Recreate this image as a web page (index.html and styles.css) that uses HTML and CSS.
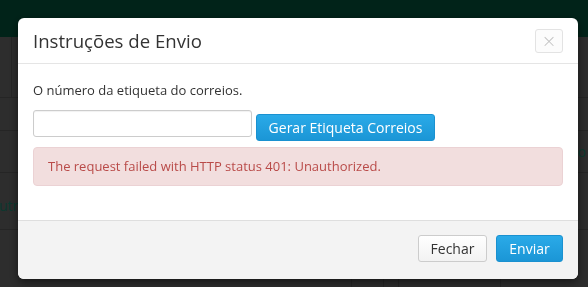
FILE: index.html
```html
<!DOCTYPE html>
<html lang="pt-BR">
<head>
    <meta charset="UTF-8">
    <meta name="viewport" content="width=device-width, initial-scale=1.0">
    <title>Instruções de Envio</title>
    <link rel="stylesheet" href="styles.css">
</head>
<body>
    <div class="topbar"></div>
    <div class="page">
        <div class="row row-head">
            <div class="cell cell-side"></div>
            <div class="cell"></div>
        </div>
        <div class="row row-a"></div>
        <div class="row row-b">
            <div class="cell cell-fill"></div>
            <div class="cell cell-end">o</div>
        </div>
        <div class="row row-c">
            <div class="cell cell-label">utros</div>
        </div>
        <div class="row row-d">
            <div class="cell cell-fill"></div>
            <div class="cell cell-s1"></div>
            <div class="cell cell-s2"></div>
            <div class="cell cell-s3"></div>
            <div class="cell cell-s4"></div>
        </div>
    </div>

    <div class="backdrop"></div>
    <div class="modal">
        <div class="modal-header">
            <h3 class="modal-title">Instruções de Envio</h3>
            <button class="close-btn" type="button">&times;</button>
        </div>
        <div class="modal-body">
            <p class="hint">O número da etiqueta do correios.</p>
            <div class="input-row">
                <input type="text" class="tag-input">
                <button type="button" class="btn btn-primary btn-gen">Gerar Etiqueta Correios</button>
            </div>
            <div class="alert-error">The request failed with HTTP status 401: Unauthorized.</div>
        </div>
        <div class="modal-footer">
            <button type="button" class="btn btn-default">Fechar</button>
            <button type="button" class="btn btn-primary">Enviar</button>
        </div>
    </div>
</body>
</html>
```

FILE: styles.css
```css
* {
    margin: 0;
    padding: 0;
    box-sizing: border-box;
    font-family: 'Open Sans', 'Liberation Sans', sans-serif;
}

body {
    background: #2e2e2e;
    overflow: hidden;
    height: 287px;
}

/* page behind the dialog */
.topbar {
    height: 37px;
    background: #02241a;
}

.row {
    display: flex;
    border-bottom: 1px solid #262626;
}

.row-head {
    height: 61px;
}

.cell-side {
    width: 12px;
    border-right: 1px solid #262626;
}

.row-a {
    height: 33px;
}

.row-b {
    height: 42px;
    align-items: center;
}

.cell-fill {
    flex: 1;
}

.cell-end {
    color: #0c3a30;
    font-size: 14px;
    margin-right: 2px;
}

.row-c {
    height: 57px;
    align-items: center;
}

.cell-label {
    color: #0c3a30;
    font-size: 14px;
    margin-left: -1px;
    margin-top: 8px;
}

.row-d {
    height: 60px;
}

.cell-s1,
.cell-s2,
.cell-s3,
.cell-s4 {
    border-left: 1px solid #262626;
}

.cell-s1 { width: 32px; }
.cell-s2 { width: 15px; }
.cell-s3 { width: 102px; }
.cell-s4 { width: 88px; }

.backdrop {
    position: fixed;
    inset: 0;
    background: rgba(0, 0, 0, 0.02);
}

/* dialog */
.modal {
    position: fixed;
    top: 18px;
    left: 18px;
    width: 560px;
    background: #fff;
    border-radius: 6px;
    box-shadow: 0 3px 9px rgba(0, 0, 0, 0.5);
    overflow: hidden;
}

.modal-header {
    display: flex;
    justify-content: space-between;
    align-items: center;
    padding: 10px 15px;
    border-bottom: 1px solid #e5e5e5;
    height: 46px;
}

.modal-title {
    font-size: 18.6px;
    font-weight: 400;
    color: #333;
    line-height: 24px;
}

.close-btn {
    width: 28px;
    height: 24px;
    background: #fcfcfc;
    border: 1px solid #e3e3e3;
    border-radius: 3px;
    color: #c4c4c4;
    font-size: 18px;
    line-height: 20px;
    font-family: 'DejaVu Sans', sans-serif;
    font-weight: 200;
}

.modal-body {
    padding: 16px 15px 15px;
}

.hint {
    font-size: 13px;
    color: #333;
    line-height: 20px;
    margin-bottom: 10px;
}

.input-row {
    display: flex;
    align-items: flex-start;
    gap: 4px;
}

.tag-input {
    width: 219px;
    height: 27px;
    border: 1px solid #ccc;
    border-radius: 3px;
    background: #fff;
    box-shadow: inset 0 1px 1px rgba(0, 0, 0, 0.06);
}

.btn {
    height: 27px;
    padding: 0 12px;
    font-size: 14px;
    line-height: 25px;
    border-radius: 3px;
    border: 1px solid transparent;
    cursor: pointer;
}

.btn-primary {
    color: #fff;
    background: linear-gradient(#2aaae8, #1b96d6);
    border-color: #1a91d0;
}

.btn-default {
    color: #333;
    background: linear-gradient(#fff, #f2f2f2);
    border-color: #ccc;
}

.btn-gen {
    margin-top: 4px;
    width: 179px;
    padding: 0;
}

.alert-error {
    margin-top: 6px;
    margin-bottom: 19px;
    padding: 9px 14px;
    font-size: 13px;
    line-height: 19px;
    color: #b94a48;
    background: #f2dede;
    border: 1px solid #ebd2d4;
    border-radius: 4px;
}

.modal-footer {
    display: flex;
    justify-content: flex-end;
    gap: 9px;
    padding: 14px 15px 17px;
    background: #f3f3f3;
    border-top: 1px solid #dedede;
}

.modal-footer .btn-default {
    width: 69px;
    padding: 0;
}

.modal-footer .btn-primary {
    width: 67px;
    padding: 0;
}
```
